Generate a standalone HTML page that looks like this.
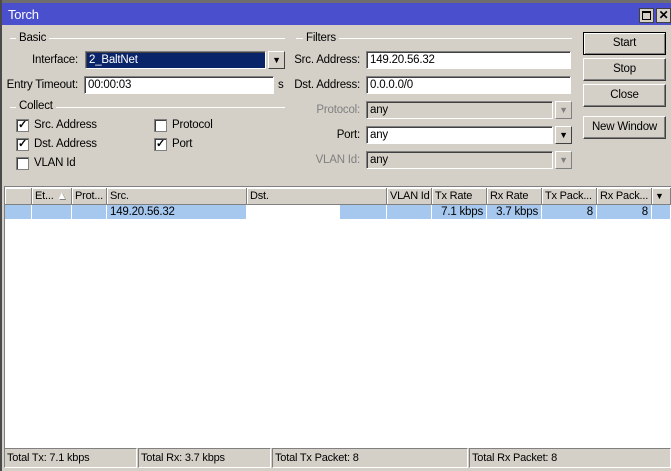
<!DOCTYPE html>
<html><head><style>
*{margin:0;padding:0;box-sizing:border-box}
body{width:671px;height:471px;background:#d4d0c8;font-family:"Liberation Sans",sans-serif;font-size:11px;color:#000;position:relative;overflow:hidden;letter-spacing:-0.2px}
.a{position:absolute;white-space:nowrap}
.lbl{text-align:right;line-height:17px}
.f{position:absolute;background:#fff;border:1px solid #808080;border-right-color:#fff;border-bottom-color:#fff;box-shadow:inset 1px 1px 0 #404040;height:18px;line-height:16px;padding-left:3px}
.g{background:#d4d0c8;color:#000}
.dd{position:absolute;width:17px;height:18px;border:1px solid #808080;background:#d4d0c8;text-align:center;font-size:9px;line-height:16px}
.grp{position:absolute;height:1px;background:#a0a0a0;border-bottom:1px solid #fff}
.cb{position:absolute;width:13px;height:13px;background:#fff;border:1px solid #808080;box-shadow:inset 1px 1px 0 #404040;font-size:11px;line-height:11px;text-align:center;font-weight:bold}
.btn{position:absolute;left:583px;width:83px;height:23px;border:1px solid #fff;border-right-color:#404040;border-bottom-color:#404040;box-shadow:inset -1px -1px 0 #808080;text-align:center;line-height:20px;font-size:11.5px}
.th{position:absolute;top:188px;height:17px;border-right:1px solid #808080;border-bottom:1px solid #808080;background:#d4d0c8;line-height:16px;padding-left:3px;box-shadow:inset 1px 1px 0 #fff;overflow:hidden}
.td{position:absolute;top:205px;height:14px;background:#a6c8ee;border-right:1px solid #fff;line-height:14px;padding:0 3px;overflow:hidden}
.sb{position:absolute;top:448px;height:20px;border:1px solid #808080;border-right-color:#fff;border-bottom-color:#fff;line-height:18px;padding-left:2px}
.t{font-size:11.5px}
</style></head><body>
<div class="a" style="left:0;top:0;width:671px;height:3px;background:#6e6e6e"></div>
<div class="a" style="left:0;top:0;width:2px;height:471px;background:#4a4a4a"></div>
<div class="a" style="left:2px;top:3px;width:669px;height:22px;background:#4a4fcd"></div>
<div class="a" style="left:8px;top:7px;color:#fff;font-size:13px">Torch</div>
<div class="a" style="left:639px;top:8px;width:15px;height:15px;background:#d4d0c8;border:1px solid #404040"><div style="margin:2px;width:9px;height:9px;border:1px solid #000;border-top-width:2px"></div></div>
<div class="a" style="left:656px;top:8px;width:15px;height:15px;background:#d4d0c8;border:1px solid #404040;font-size:12px;font-weight:bold;text-align:center;line-height:13px">✕</div>

<div class="grp" style="left:10px;top:38px;width:275px"></div>
<div class="a t" style="left:16px;top:32px;background:#d4d0c8;padding:0 3px">Basic</div>
<div class="a lbl t" style="left:0;width:78px;top:52px">Interface:</div>
<div class="f t" style="left:85px;top:51px;width:181px;background:#0a246a;color:#fff">2_BaltNet</div>
<div class="dd" style="left:268px;top:51px;border-color:#fff #404040 #404040 #fff">▼</div>
<div class="a lbl t" style="left:0;width:78px;top:77px">Entry Timeout:</div>
<div class="f t" style="left:84px;top:76px;width:190px">00:00:03</div>
<div class="a t" style="left:278px;top:79px">s</div>
<div class="grp" style="left:10px;top:107px;width:275px"></div>
<div class="a t" style="left:16px;top:100px;background:#d4d0c8;padding:0 3px">Collect</div>
<div class="cb" style="left:16px;top:119px">✓</div><div class="a t" style="left:34px;top:119px">Src. Address</div>
<div class="cb" style="left:16px;top:138px">✓</div><div class="a t" style="left:34px;top:138px">Dst. Address</div>
<div class="cb" style="left:16px;top:157px"></div><div class="a t" style="left:34px;top:157px">VLAN Id</div>
<div class="cb" style="left:154px;top:119px"></div><div class="a t" style="left:172px;top:119px">Protocol</div>
<div class="cb" style="left:154px;top:138px">✓</div><div class="a t" style="left:172px;top:138px">Port</div>

<div class="grp" style="left:296px;top:38px;width:276px"></div>
<div class="a t" style="left:303px;top:32px;background:#d4d0c8;padding:0 3px">Filters</div>
<div class="a lbl t" style="left:280px;width:80px;top:52px">Src. Address:</div>
<div class="f t" style="left:366px;top:51px;width:205px">149.20.56.32</div>
<div class="a lbl t" style="left:280px;width:80px;top:77px">Dst. Address:</div>
<div class="f t" style="left:366px;top:76px;width:205px">0.0.0.0/0</div>
<div class="a lbl t" style="left:280px;width:80px;top:102px;color:#808080">Protocol:</div>
<div class="f g t" style="left:366px;top:101px;width:187px">any</div>
<div class="dd" style="left:555px;top:101px;color:#808080;border-color:#fff #808080 #808080 #fff">▼</div>
<div class="a lbl t" style="left:280px;width:80px;top:127px">Port:</div>
<div class="f t" style="left:366px;top:126px;width:187px">any</div>
<div class="dd" style="left:555px;top:126px;border-color:#fff #404040 #404040 #fff">▼</div>
<div class="a lbl t" style="left:280px;width:80px;top:152px;color:#808080">VLAN Id:</div>
<div class="f g t" style="left:366px;top:151px;width:187px">any</div>
<div class="dd" style="left:555px;top:151px;color:#808080;border-color:#fff #808080 #808080 #fff">▼</div>

<div class="btn" style="top:32px;border:1px solid #000;box-shadow:inset 1px 1px 0 #fff,inset -1px -1px 0 #808080">Start</div>
<div class="btn" style="top:58px">Stop</div>
<div class="btn" style="top:84px">Close</div>
<div class="btn" style="top:116px">New Window</div>

<div class="a" style="left:4px;top:186px;width:667px;height:262px;background:#fff;border-top:1px solid #808080;border-left:1px solid #808080"></div>
<div class="th" style="left:5px;width:27px"></div>
<div class="th" style="left:32px;width:40px">Et... <span style="color:#fff;text-shadow:1px 1px #808080">▲</span></div>
<div class="th" style="left:72px;width:35px">Prot...</div>
<div class="th" style="left:107px;width:140px">Src.</div>
<div class="th" style="left:247px;width:140px">Dst.</div>
<div class="th" style="left:387px;width:45px">VLAN Id</div>
<div class="th" style="left:432px;width:55px">Tx Rate</div>
<div class="th" style="left:487px;width:55px">Rx Rate</div>
<div class="th" style="left:542px;width:55px">Tx Pack...</div>
<div class="th" style="left:597px;width:55px">Rx Pack...</div>
<div class="th" style="left:652px;width:19px;font-size:9px">▼</div>
<div class="td" style="left:5px;width:27px"></div>
<div class="td" style="left:32px;width:40px"></div>
<div class="td" style="left:72px;width:35px"></div>
<div class="td t" style="left:107px;width:140px">149.20.56.32</div>
<div class="td" style="left:265px;width:122px"></div>
<div class="a" style="left:250px;top:205px;width:90px;height:14px;background:#fff"></div>
<div class="td" style="left:387px;width:45px"></div>
<div class="td t" style="left:432px;width:55px;text-align:right">7.1 kbps</div>
<div class="td t" style="left:487px;width:55px;text-align:right">3.7 kbps</div>
<div class="td t" style="left:542px;width:55px;text-align:right">8</div>
<div class="td t" style="left:597px;width:55px;text-align:right">8</div>
<div class="td" style="left:652px;width:19px"></div>

<div class="sb" style="left:4px;width:133px">Total Tx: 7.1 kbps</div>
<div class="sb" style="left:138px;width:133px">Total Rx: 3.7 kbps</div>
<div class="sb" style="left:272px;width:196px">Total Tx Packet: 8</div>
<div class="sb" style="left:469px;width:202px">Total Rx Packet: 8</div>
</body></html>
